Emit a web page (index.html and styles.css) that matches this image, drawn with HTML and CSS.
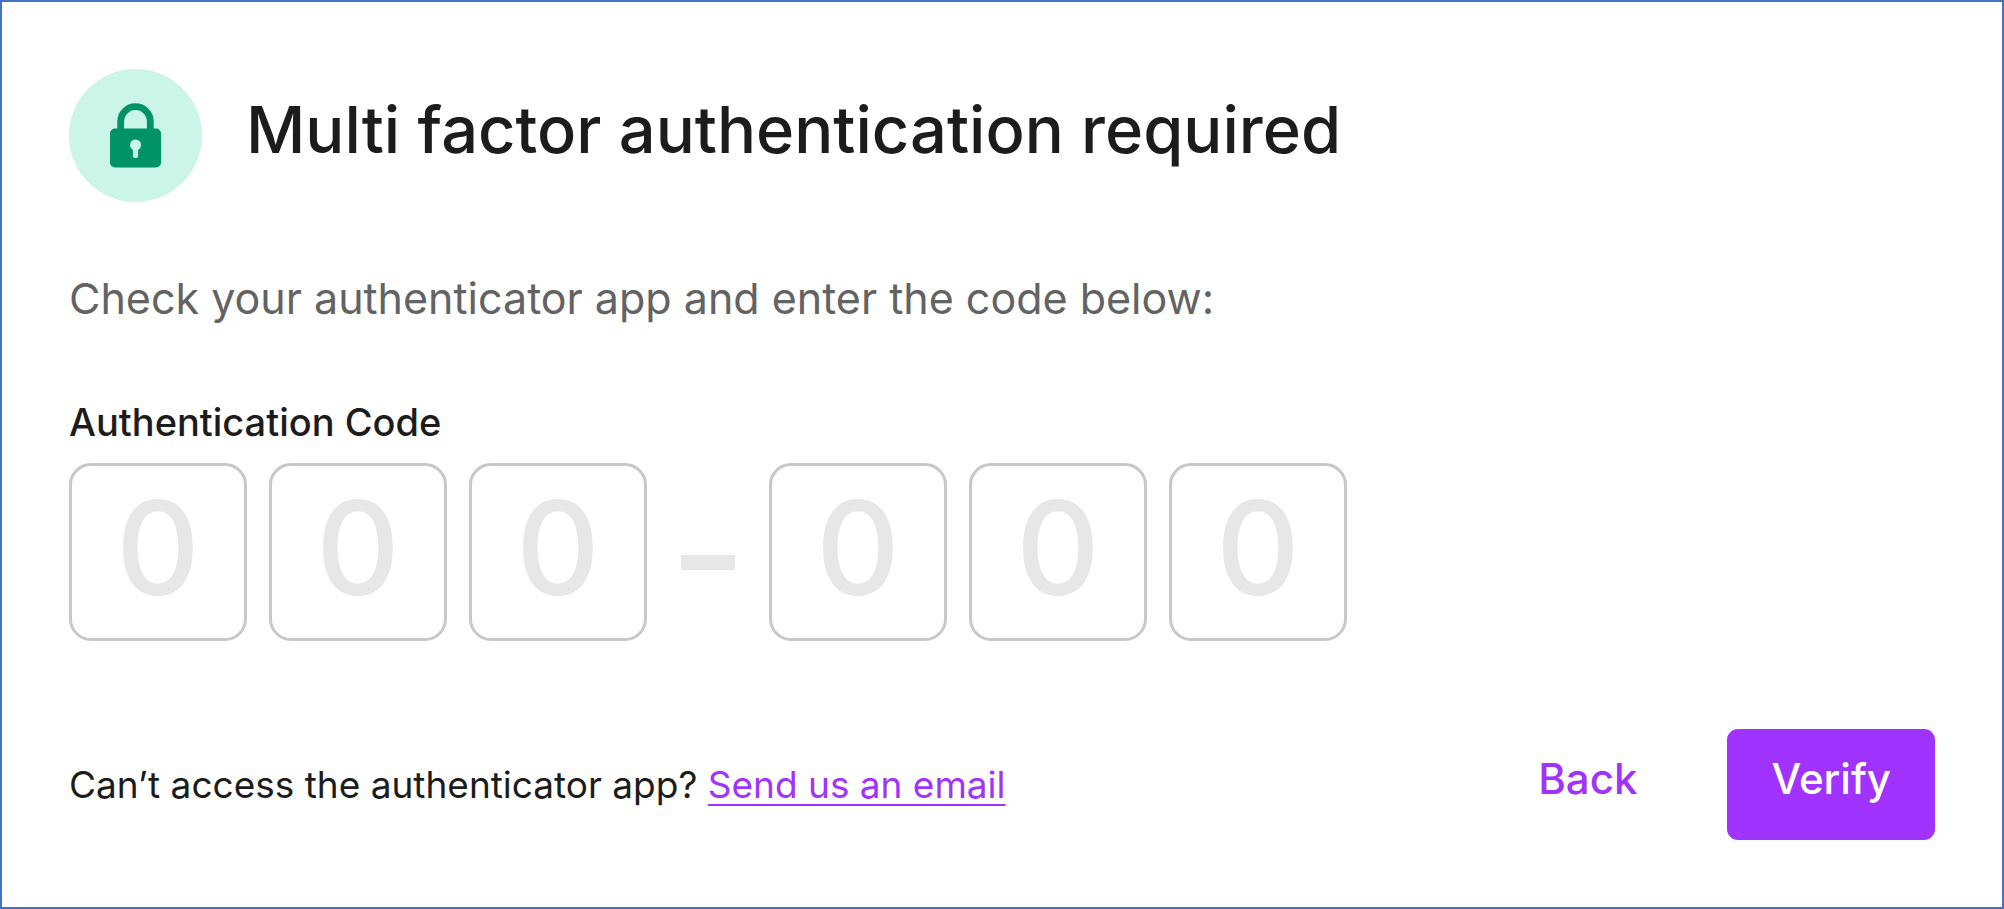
FILE: index.html
```html
<!DOCTYPE html>
<html lang="en">
<head>
<meta charset="utf-8">
<meta name="viewport" content="width=device-width, initial-scale=1">
<title>Multi factor authentication required</title>
<link rel="stylesheet" href="styles.css">
</head>
<body>
<main class="panel">
  <form class="form">
    <header class="header">
      <svg class="badge" viewBox="0 0 133 133" aria-hidden="true">
        <circle cx="66.500" cy="66.500" r="66.500" fill="#cbf5e8"/>
        <path d="M51.700 61V52.500a14.800 14.800 0 0 1 29.600 0V61" fill="none" stroke="#009365" stroke-width="6.800"/>
        <rect x="41" y="59.500" width="51" height="39" rx="5" fill="#009365"/>
        <circle cx="66.500" cy="76" r="5.500" fill="#cbf5e8"/>
        <path d="M66.500 77v9.500" stroke="#cbf5e8" stroke-width="5.200" stroke-linecap="round"/>
      </svg>
      <h1 class="title">Multi factor authentication required</h1>
    </header>
    <p class="intro">Check your authenticator app and enter the code below:</p>
    <fieldset class="code">
      <legend class="label">Authentication Code</legend>
      <div class="digits">
        <input class="digit" type="text" inputmode="numeric" maxlength="1" placeholder="0" aria-label="Digit 1">
        <input class="digit" type="text" inputmode="numeric" maxlength="1" placeholder="0" aria-label="Digit 2">
        <input class="digit" type="text" inputmode="numeric" maxlength="1" placeholder="0" aria-label="Digit 3">
        <span class="dash"></span>
        <input class="digit" type="text" inputmode="numeric" maxlength="1" placeholder="0" aria-label="Digit 4">
        <input class="digit" type="text" inputmode="numeric" maxlength="1" placeholder="0" aria-label="Digit 5">
        <input class="digit" type="text" inputmode="numeric" maxlength="1" placeholder="0" aria-label="Digit 6">
      </div>
    </fieldset>
    <footer class="footer">
      <p class="help">Can’t access the authenticator app? <a class="link" href="#email">Send us an email</a></p>
      <div class="actions">
        <button class="button back" type="button">Back</button>
        <button class="button verify" type="submit">Verify</button>
      </div>
    </footer>
  </form>
</main>
</body>
</html>
```
FILE: styles.css
```css
* {
  box-sizing: border-box;
}

body {
  margin: 0;
  background: #fff;
  color: #1c1c1c;
  font-family: Inter, "Liberation Sans", sans-serif;
}

.panel {
  min-height: 100vh;
  padding: 67px;
  border: 2px solid #4472c4;
}

.header {
  display: flex;
  align-items: center;
  gap: 44px;
}

.badge {
  flex: none;
  width: 133px;
  height: 133px;
}

.title {
  margin: 0;
  padding-bottom: 12px;
  font-size: 65px;
  font-weight: 500;
  line-height: 80px;
}

.intro {
  margin: 68px 0 0;
  color: #636363;
  font-size: 43px;
  line-height: 56px;
}

.code {
  margin: 72px 0 0;
  padding: 0;
  border: 0;
}

.label {
  padding: 0;
  font-size: 38px;
  font-weight: 500;
  line-height: 48px;
}

.digits {
  display: flex;
  align-items: center;
  gap: 22px;
  padding-top: 17px;
}

.digit {
  width: 178px;
  height: 178px;
  padding: 0 0 10px;
  border: 3px solid #c8c8c8;
  border-radius: 22px;
  background: #fff;
  color: #1c1c1c;
  font: 500 130px/160px Inter, "Liberation Sans", sans-serif;
  text-align: center;
}

.digit::placeholder {
  color: #e7e7e7;
  opacity: 1;
}

.dash {
  width: 54px;
  height: 15px;
  margin: 20px 12px 0;
  background: #e7e7e7;
}

.footer {
  display: flex;
  align-items: center;
  justify-content: space-between;
  margin-top: 88px;
}

.help {
  margin: 0;
  font-size: 37px;
  line-height: 48px;
}

.link {
  color: #a033ff;
  text-decoration: underline;
  text-decoration-thickness: 2px;
  text-underline-offset: 6px;
  text-decoration-skip-ink: none;
}

.actions {
  display: flex;
  gap: 46px;
}

.button {
  padding: 22px 44px 33px;
  border: 0;
  border-radius: 11px;
  font: 500 42px/56px Inter, "Liberation Sans", sans-serif;
}

.back {
  background: none;
  color: #a033ff;
}

.verify {
  background: #a033ff;
  color: #fff;
}
```
